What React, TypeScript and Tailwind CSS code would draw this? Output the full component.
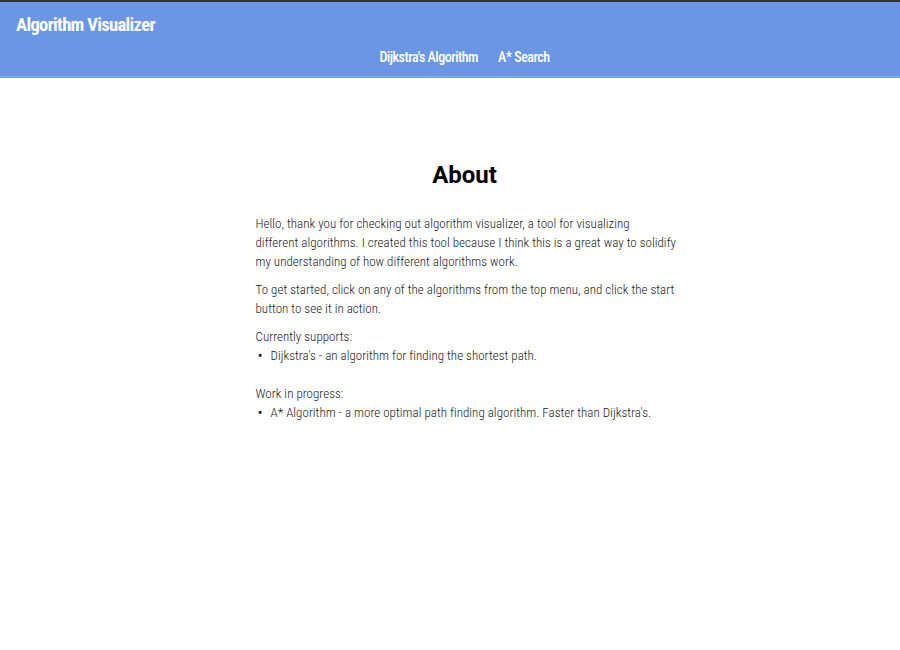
import React from "react";

export default function App() {
  return (
    <div className="min-h-[650px] bg-white font-['Roboto',sans-serif]">
      <header className="border-t-2 border-[#333333] bg-[#6b96e5]">
        <div className="h-[74px] flex flex-col">
          <div className="pl-4 pt-[12px] h-[38px]">
            <span className="text-white font-bold text-[18.5px] leading-[22px] tracking-[-0.65px] font-stretch-condensed">
              Algorithm Visualizer
            </span>
          </div>
          <nav className="flex justify-center gap-5 pl-[29px] pt-[8px]">
            <a className="text-white font-medium text-[14px] leading-[18px] tracking-[-0.5px] font-stretch-condensed">Dijkstra's Algorithm</a>
            <a className="text-white font-medium text-[14px] leading-[18px] tracking-[-0.5px] font-stretch-condensed">A* Search</a>
          </nav>
        </div>
        <div className="h-[2px] bg-[#7aa3ef]"></div>
      </header>
      <main className="flex justify-center pl-[29px]">
        <div className="w-[418px] pt-[82px]">
          <h1 className="text-center text-[24px] leading-[30px] font-bold text-black">About</h1>
          <div className="mt-[24px] mr-[-30px] text-[13px] leading-[19px] font-light tracking-[0.03px] font-stretch-condensed text-[#1a1a1a]">
            <p>
              Hello, thank you for checking out algorithm visualizer, a tool for visualizing
              <br />
              different algorithms. I created this tool because I think this is a great way to solidify
              <br />
              my understanding of how different algorithms work.
            </p>
            <p className="mt-[9px]">
              To get started, click on any of the algorithms from the top menu, and click the start
              <br />
              button to see it in action.
            </p>
            <p className="mt-[9px]">Currently supports:</p>
            <ul>
              <li className="flex">
                <span className="w-[15px] pl-[2px] text-[16px] leading-[19px]">•</span>
                <span>Dijkstra's - an algorithm for finding the shortest path.</span>
              </li>
            </ul>
            <p className="mt-[19px]">Work in progress:</p>
            <ul>
              <li className="flex">
                <span className="w-[15px] pl-[2px] text-[16px] leading-[19px]">•</span>
                <span>A* Algorithm - a more optimal path finding algorithm. Faster than Dijkstra's.</span>
              </li>
            </ul>
          </div>
        </div>
      </main>
    </div>
  );
}
